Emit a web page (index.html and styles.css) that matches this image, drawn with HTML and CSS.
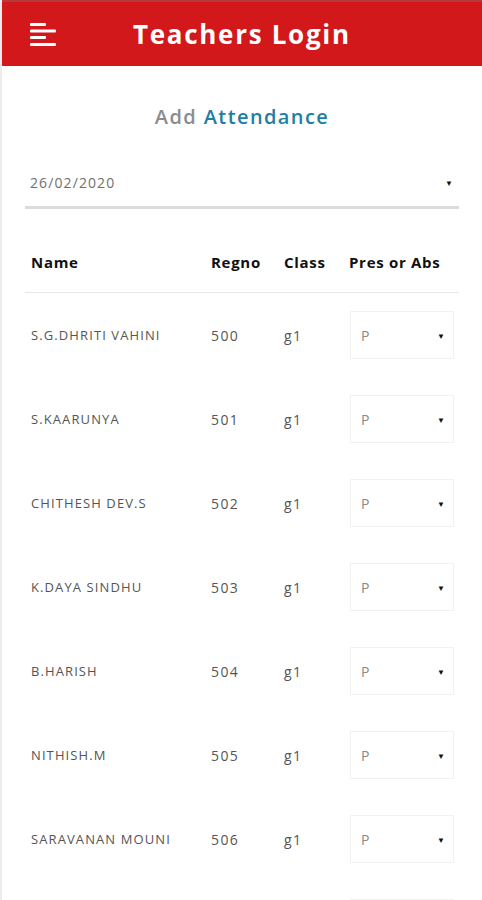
FILE: index.html
```html
<!DOCTYPE html>
<html>
<head>
<meta charset="utf-8">
<link rel="stylesheet" href="styles.css">
</head>
<body>
<div class="page">
  <header class="topbar">
    <div class="menu">
      <svg width="28" height="24" viewBox="0 0 28 24">
        <rect x="0" y="0" width="16" height="3" rx="1" fill="#fff"/>
        <rect x="0" y="6.5" width="26" height="3" rx="1" fill="#fff"/>
        <rect x="0" y="13" width="16" height="3" rx="1" fill="#fff"/>
        <rect x="0" y="20" width="26" height="3" rx="1" fill="#fff"/>
      </svg>
    </div>
    <h1 class="title">Teachers Login</h1>
  </header>

  <main class="content">
    <h2 class="heading"><span class="muted">Add</span> <span class="accent">Attendance</span></h2>

    <div class="date-select">
      <span class="date-value">26/02/2020</span>
      <span class="caret">&#9660;</span>
    </div>

    <div class="table">
      <div class="row head">
        <div class="c-name">Name</div>
        <div class="c-reg">Regno</div>
        <div class="c-class">Class</div>
        <div class="c-pres">Pres or Abs</div>
      </div>
      <div class="row">
        <div class="c-name">S.G.DHRITI VAHINI</div><div class="c-reg">500</div><div class="c-class">g1</div>
        <div class="c-pres"><div class="pick"><span>P</span><span class="caret">&#9660;</span></div></div>
      </div>
      <div class="row">
        <div class="c-name">S.KAARUNYA</div><div class="c-reg">501</div><div class="c-class">g1</div>
        <div class="c-pres"><div class="pick"><span>P</span><span class="caret">&#9660;</span></div></div>
      </div>
      <div class="row">
        <div class="c-name">CHITHESH DEV.S</div><div class="c-reg">502</div><div class="c-class">g1</div>
        <div class="c-pres"><div class="pick"><span>P</span><span class="caret">&#9660;</span></div></div>
      </div>
      <div class="row">
        <div class="c-name">K.DAYA SINDHU</div><div class="c-reg">503</div><div class="c-class">g1</div>
        <div class="c-pres"><div class="pick"><span>P</span><span class="caret">&#9660;</span></div></div>
      </div>
      <div class="row">
        <div class="c-name">B.HARISH</div><div class="c-reg">504</div><div class="c-class">g1</div>
        <div class="c-pres"><div class="pick"><span>P</span><span class="caret">&#9660;</span></div></div>
      </div>
      <div class="row">
        <div class="c-name">NITHISH.M</div><div class="c-reg">505</div><div class="c-class">g1</div>
        <div class="c-pres"><div class="pick"><span>P</span><span class="caret">&#9660;</span></div></div>
      </div>
      <div class="row">
        <div class="c-name">SARAVANAN MOUNI</div><div class="c-reg">506</div><div class="c-class">g1</div>
        <div class="c-pres"><div class="pick"><span>P</span><span class="caret">&#9660;</span></div></div>
      </div>
      <div class="row">
        <div class="c-name"></div><div class="c-reg"></div><div class="c-class"></div>
        <div class="c-pres"><div class="pick"></div></div>
      </div>
    </div>
  </main>
</div>
</body>
</html>
```

FILE: styles.css
```css
* { box-sizing: border-box; }
html, body { margin: 0; padding: 0; }
body {
  width: 482px;
  height: 900px;
  overflow: hidden;
  background: #fff;
  font-family: "Open Sans", "Noto Sans", sans-serif;
}
.page {
  border-left: 2px solid #ececec;
  min-height: 900px;
}
.topbar {
  height: 66px;
  background: #d2181b;
  border-top: 2px solid #b8393b;
  display: flex;
  align-items: center;
  padding-left: 28px;
}
.menu { display: flex; width: 28px; height: 24px; margin-top: 2px; }
.title {
  margin: 0 0 0 75px;
  color: #fff;
  font-size: 26px;
  font-weight: 700;
  letter-spacing: 1.7px;
}
.content { padding: 0 23px 0 23px; }
.heading {
  margin: 0;
  padding-top: 37px;
  height: 92px;
  text-align: center;
  font-size: 20px;
  font-weight: 600;
  line-height: 28px;
  letter-spacing: 1.4px;
}
.muted { color: #8c8c8c; }
.accent { color: #1f7ea3; }
.date-select {
  height: 51px;
  display: flex;
  align-items: center;
  justify-content: space-between;
  padding: 0 6px 0 5px;
  border-bottom: 3px solid #dcdcdc;
}
.date-value { font-size: 14px; color: #707070; letter-spacing: 1.1px; }
.caret { font-size: 8px; color: #111; letter-spacing: 0; }
.table { margin-top: 22px; }
.row {
  display: grid;
  grid-template-columns: 180px 73px 65px 116px;
  align-items: center;
  height: 84px;
}
.row > div { padding-left: 6px; }
.row.head {
  height: 62px;
  border-bottom: 1px solid #e6e6e6;
}
.row.head > div {
  font-size: 15px;
  font-weight: 700;
  color: #111;
  letter-spacing: 0.7px;
}
.row .c-name { font-size: 13px; color: #555; letter-spacing: 1.1px; }
.row .c-reg, .row .c-class { font-size: 14px; color: #555; letter-spacing: 1.4px; }
.pick {
  width: 104px;
  height: 48px;
  margin-left: 1px;
  border: 1px solid #f1f1f1;
  display: flex;
  align-items: center;
  justify-content: space-between;
  padding: 0 8px 0 10px;
  font-size: 14px;
  color: #888;
}
```
